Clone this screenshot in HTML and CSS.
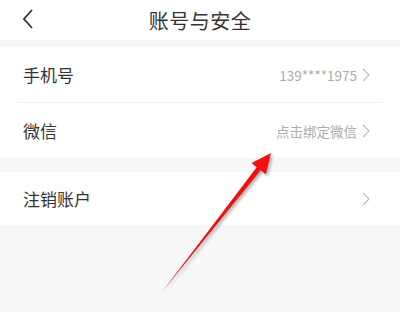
FILE: index.html
```html
<!DOCTYPE html>
<html lang="zh-CN">
<head>
    <meta charset="UTF-8">
    <meta name="viewport" content="width=device-width, initial-scale=1.0">
    <title>账号与安全</title>
    <link rel="stylesheet" href="styles.css">
</head>
<body>

<div class="page">
    <div class="header">
        <svg class="back" width="12" height="20" viewBox="0 0 12 20">
            <path d="M10 1 L2 10 L10 19" fill="none" stroke="#333" stroke-width="1.8"/>
        </svg>
        <h1 class="title">账号与安全</h1>
    </div>

    <div class="group first">
        <div class="row">
            <span class="label">手机号</span>
            <span class="value">139****1975</span>
            <svg class="chev" width="8" height="14" viewBox="0 0 8 14"><path d="M1 1 L7 7 L1 13" fill="none" stroke="#bbb" stroke-width="1.2"/></svg>
        </div>
        <div class="divider"></div>
        <div class="row">
            <span class="label">微信</span>
            <span class="value">点击绑定微信</span>
            <svg class="chev" width="8" height="14" viewBox="0 0 8 14"><path d="M1 1 L7 7 L1 13" fill="none" stroke="#bbb" stroke-width="1.2"/></svg>
        </div>
    </div>

    <div class="group">
        <div class="row last">
            <span class="label">注销账户</span>
            <span class="value"></span>
            <svg class="chev" width="8" height="14" viewBox="0 0 8 14"><path d="M1 1 L7 7 L1 13" fill="none" stroke="#bbb" stroke-width="1.2"/></svg>
        </div>
    </div>
</div>

<!-- red pointer drawn over the page -->
<svg class="pointer" width="400" height="312" viewBox="0 0 400 312">
    <defs>
        <filter id="shade" x="-20%" y="-20%" width="140%" height="140%">
            <feGaussianBlur stdDeviation="1.5"/>
        </filter>
    </defs>
    <polygon points="164,294 262.7,172.2 267.8,176.3 273,155 253.6,165.1 258.7,169.2" fill="#555" opacity="0.45" filter="url(#shade)"/>
    <polygon points="162,292 260.7,170.2 265.8,174.3 271,153 251.6,163.1 256.7,167.2" fill="#f01010"/>
</svg>

</body>
</html>
```

FILE: styles.css
```css
body {
    margin: 0;
    background-color: #f7f7f7;
    font-family: "Noto Sans CJK SC", "Noto Sans", sans-serif;
}
.page {
    width: 400px;
    height: 312px;
    background-color: #f7f7f7;
}
.header {
    position: relative;
    height: 40px;
    background-color: #ffffff;
    display: flex;
    align-items: center;
    justify-content: center;
}
.back {
    position: absolute;
    left: 22px;
    top: 9px;
}
.title {
    margin: 0;
    font-size: 20px;
    font-weight: normal;
    color: #333;
    letter-spacing: 0.5px;
}
.group {
    background-color: #ffffff;
    margin-top: 14px;
}
.group.first {
    margin-top: 7px;
}
.row {
    height: 55px;
    display: flex;
    align-items: center;
    padding: 0 30px 0 23px;
}
.row.last {
    height: 53px;
}
.label {
    font-size: 17px;
    color: #333;
}
.value {
    margin-left: auto;
    font-size: 13.5px;
    color: #aaa;
    margin-right: 5px;
}
.chev {
    display: block;
}
.divider {
    height: 1px;
    background-color: #f0f0f0;
    margin: 0 17px;
}
.pointer {
    position: absolute;
    left: 0;
    top: 0;
}
```
